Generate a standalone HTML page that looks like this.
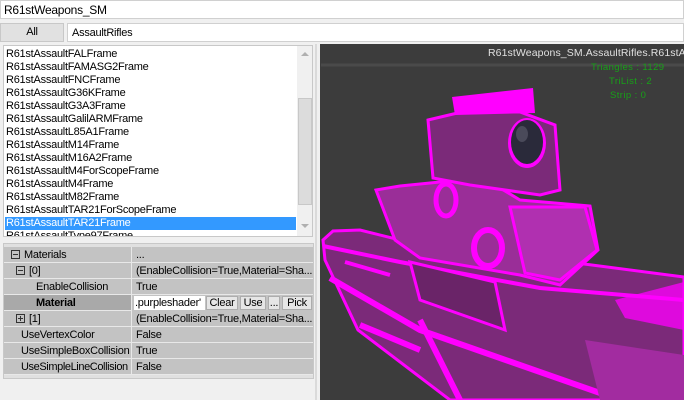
<!DOCTYPE html>
<html><head><style>
*{margin:0;padding:0;box-sizing:border-box}
body{width:684px;height:400px;overflow:hidden;background:#f0f0f0;font-family:"Liberation Sans",sans-serif;font-size:11px;color:#000;position:relative;letter-spacing:-0.25px}
.abs{position:absolute}
.tb{background:#fff;border:1px solid #d0d0d0}
.li{position:absolute;left:2px;height:13px;line-height:13px;white-space:nowrap}
.row{position:absolute;left:4px;width:309px;height:16px;border-bottom:1px solid #e8e8e8;background:#c3c3c3}
.row span{position:absolute;line-height:16px;white-space:nowrap}
.c2{left:132px}
.btn{position:absolute;top:1px;height:14px;background:#e6e6e6;border:1px solid #adadad;line-height:12px;text-align:center}
.pm{display:inline-block;width:9px;height:9px;border:1px solid #333;position:relative;vertical-align:-1px;margin-right:4px}
.pm:before{content:"";position:absolute;left:1px;top:3px;width:5px;height:1px;background:#333}
.pl:after{content:"";position:absolute;left:3px;top:1px;width:1px;height:5px;background:#333}
</style></head><body>
<div class="abs tb" style="left:0;top:0;width:684px;height:19px;padding:2px 3px;font-size:12px">R61stWeapons_SM</div>
<div class="abs" style="left:0;top:23px;width:64px;height:19px;background:#e1e1e1;border:1px solid #c8c8c8;text-align:center;line-height:17px">All</div>
<div class="abs tb" style="left:67px;top:23px;width:617px;height:19px;padding:3px 4px">AssaultRifles</div>
<div class="abs" style="left:3px;top:45px;width:310px;height:192px;background:#fff;border:1px solid #c8c8c8;overflow:hidden">
<div class="li" style="top:2px">R61stAssaultFALFrame</div>
<div class="li" style="top:15px">R61stAssaultFAMASG2Frame</div>
<div class="li" style="top:28px">R61stAssaultFNCFrame</div>
<div class="li" style="top:41px">R61stAssaultG36KFrame</div>
<div class="li" style="top:54px">R61stAssaultG3A3Frame</div>
<div class="li" style="top:67px">R61stAssaultGalilARMFrame</div>
<div class="li" style="top:80px">R61stAssaultL85A1Frame</div>
<div class="li" style="top:93px">R61stAssaultM14Frame</div>
<div class="li" style="top:106px">R61stAssaultM16A2Frame</div>
<div class="li" style="top:119px">R61stAssaultM4ForScopeFrame</div>
<div class="li" style="top:132px">R61stAssaultM4Frame</div>
<div class="li" style="top:145px">R61stAssaultM82Frame</div>
<div class="li" style="top:158px">R61stAssaultTAR21ForScopeFrame</div>
<div class="abs" style="left:1px;top:171px;width:291px;height:13px;background:#3399ff"></div>
<div class="li" style="top:171px;color:#fff">R61stAssaultTAR21Frame</div>
<div class="li" style="top:184px">R61stAssaultType97Frame</div>
<div class="abs" style="left:293px;top:0;width:16px;height:190px;background:#f0f0f0"></div>
<div class="abs" style="left:294px;top:52px;width:14px;height:107px;background:#dcdcdc;border:1px solid #c8c8c8"></div>
<div class="abs" style="left:297px;top:6px;width:0;height:0;border:4px solid transparent;border-bottom-color:#b0b0b0;border-top:0"></div>
<div class="abs" style="left:297px;top:178px;width:0;height:0;border:4px solid transparent;border-top-color:#b0b0b0;border-bottom:0"></div>
</div>
<div class="abs" style="left:3px;top:243px;width:311px;height:136px;background:#e0e0e0;border:1px solid #c8c8c8"></div>
<div class="row" style="top:247px"><span style="left:7px"><i class="pm"></i>Materials</span><span class="c2">...</span></div>
<div class="row" style="top:263px"><span style="left:12px"><i class="pm"></i>[0]</span><span class="c2">(EnableCollision=True,Material=Sha...</span></div>
<div class="row" style="top:279px"><span style="left:32px">EnableCollision</span><span class="c2">True</span></div>
<div class="row" style="top:295px;background:#a9a9a9"><span style="left:32px;font-weight:bold">Material</span>
<div class="abs" style="left:128px;top:0;width:181px;height:16px;background:#c3c3c3"></div>
<div class="abs" style="left:130px;top:1px;width:71px;height:14px;background:#fff;line-height:14px;padding-left:1px">.purpleshader'</div>
<div class="btn" style="left:202px;width:32px">Clear</div>
<div class="btn" style="left:236px;width:26px">Use</div>
<div class="btn" style="left:264px;width:12px">...</div>
<div class="btn" style="left:278px;width:30px">Pick</div></div>
<div class="row" style="top:311px"><span style="left:12px"><i class="pm pl"></i>[1]</span><span class="c2">(EnableCollision=True,Material=Sha...</span></div>
<div class="row" style="top:327px"><span style="left:17px">UseVertexColor</span><span class="c2">False</span></div>
<div class="row" style="top:343px"><span style="left:17px">UseSimpleBoxCollision</span><span class="c2">True</span></div>
<div class="row" style="top:359px"><span style="left:17px;letter-spacing:-0.4px">UseSimpleLineCollision</span><span class="c2">False</span></div>
<div class="abs" style="left:131px;top:247px;width:1px;height:128px;background:#e8e8e8"></div>
<div class="abs" style="left:315px;top:44px;width:2px;height:356px;background:#dadada"></div>
<div class="abs" style="left:320px;top:44px;width:364px;height:356px;background:#3c3c3c;overflow:hidden">
<svg width="364" height="356" viewBox="320 44 364 356" style="position:absolute;left:0;top:0">
<line x1="321" y1="65" x2="684" y2="65" stroke="#4a4a4a" stroke-width="3"/>
<polygon points="323,240 333,231 360,230 400,240 684,277 684,400 450,400 358,330 325,260" fill="#7b2a79" stroke="#ff00ff" stroke-width="3"/>
<polygon points="376,190 400,186 460,180 500,188 520,200 590,206 598,250 560,285 520,275 420,258 395,240" fill="#9a2e98" stroke="#ff00ff" stroke-width="3"/>
<polygon points="510,207 585,207 597,250 560,280 525,273" fill="#b030b0" stroke="#ff00ff" stroke-width="3"/>
<polygon points="428,120 470,110 520,112 555,125 560,190 540,195 470,185 433,178" fill="#7b2a79" stroke="#ff00ff" stroke-width="3"/>
<polygon points="452,97 533,88 535,113 455,115" fill="#ff00ff"/>
<ellipse cx="527" cy="143" rx="19" ry="25" fill="#ff00ff"/>
<ellipse cx="527" cy="142" rx="16" ry="22" fill="#2a2a3a"/>
<ellipse cx="522" cy="134" rx="6" ry="8" fill="#4a4a5a"/>
<ellipse cx="446" cy="200" rx="10" ry="16" fill="none" stroke="#ff00ff" stroke-width="5"/>
<ellipse cx="488" cy="248" rx="14" ry="18" fill="none" stroke="#ff00ff" stroke-width="6"/>
<path d="M323,246 L400,262 L540,288 L684,300 M345,262 L390,275" stroke="#ff00ff" stroke-width="4" fill="none"/>
<path d="M330,278 L420,330 L620,400 M420,320 L440,360 L460,400 M360,325 L420,350" stroke="#ff00ff" stroke-width="6" fill="none"/>
<polygon points="410,262 495,282 505,330 420,300" fill="#6a2468" stroke="#ff00ff" stroke-width="3"/>
<polygon points="615,300 684,282 684,330 625,318" fill="#ff00ff" opacity="0.75"/>
<polygon points="585,340 684,355 684,400 600,400" fill="#a22ca0"/>
<text x="488" y="56" fill="#e0e0e0" font-size="10.5" font-family="Liberation Sans" letter-spacing="0.1">R61stWeapons_SM.AssaultRifles.R61stAs</text>
<text x="591" y="70" fill="#18a018" font-size="9.5" font-family="Liberation Sans" letter-spacing="0.4">Triangles : 1129</text>
<text x="609" y="84" fill="#18a018" font-size="9.5" font-family="Liberation Sans" letter-spacing="0.4">TriList : 2</text>
<text x="610" y="98" fill="#18a018" font-size="9.5" font-family="Liberation Sans" letter-spacing="0.4">Strip : 0</text>
</svg></div>
</body></html>
